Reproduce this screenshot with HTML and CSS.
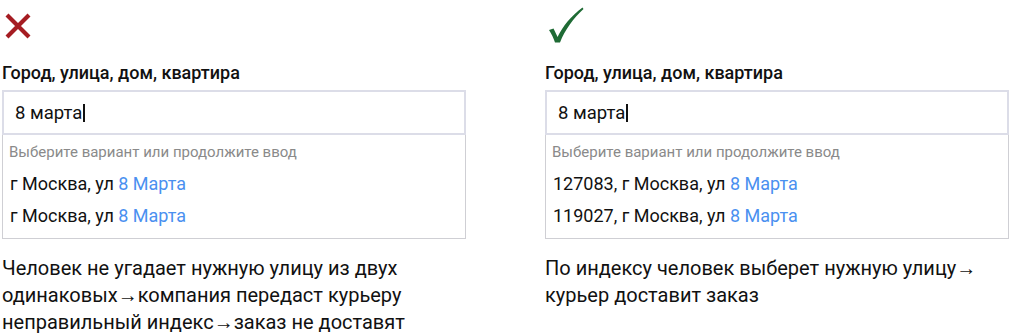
FILE: index.html
```html
<!DOCTYPE html>
<html lang="ru">
<head>
<meta charset="utf-8">
<link rel="stylesheet" href="styles.css">
</head>
<body>
<div class="page">
  <section class="col">
    <div class="mark">
      <svg width="28" height="28" viewBox="0 0 28 28"><path d="M3 3 L25 25 M25 3 L3 25" stroke="#a51c22" stroke-width="4.2" fill="none"/></svg>
    </div>
    <div class="label">Город, улица, дом, квартира</div>
    <div class="input">8 марта<span class="caret"></span></div>
    <div class="drop">
      <div class="hint">Выберите вариант или продолжите ввод</div>
      <div class="opt">г Москва, ул <span class="hl">8 Марта</span></div>
      <div class="opt">г Москва, ул <span class="hl">8 Марта</span></div>
    </div>
    <p class="desc">Человек не угадает нужную улицу из двух одинаковых→компания передаст курьеру неправильный индекс→заказ не доставят</p>
  </section>
  <section class="col">
    <div class="mark">
      <svg width="38" height="38" viewBox="0 0 38 38"><path d="M2 24 L6.5 22.5 C8 25.5 9.5 28.5 10.5 31 C16 20 24 10 35.5 1.5 L36.5 3 C26 12.5 18 24 13 36.5 L8 36.5 C6.5 32 4.5 28 2 24 Z" fill="#1f6b35"/></svg>
    </div>
    <div class="label">Город, улица, дом, квартира</div>
    <div class="input">8 марта<span class="caret"></span></div>
    <div class="drop">
      <div class="hint">Выберите вариант или продолжите ввод</div>
      <div class="opt">127083, г Москва, ул <span class="hl">8 Марта</span></div>
      <div class="opt">119027, г Москва, ул <span class="hl">8 Марта</span></div>
    </div>
    <p class="desc">По индексу человек выберет нужную улицу→ курьер доставит заказ</p>
  </section>
</div>
</body>
</html>
```

FILE: styles.css
```css
html, body {
  margin: 0;
  background: #fff;
}
body {
  font-family: Roboto, "Liberation Sans", sans-serif;
  color: #111;
}
.page {
  display: flex;
  gap: 79px;
  padding-left: 2px;
}
.col {
  width: 464px;
  display: flex;
  flex-direction: column;
}
.mark {
  height: 62px;
  display: flex;
  align-items: flex-start;
  padding-top: 12px;
  padding-left: 2px;
  box-sizing: border-box;
}
.col + .col .mark {
  padding-top: 6px;
  padding-left: 2px;
}
.label {
  font-weight: 500;
  font-size: 18px;
  line-height: 22px;
  height: 28px;
}
.input {
  height: 45px;
  box-sizing: border-box;
  border: 2px solid #dcdde8;
  font-size: 18.5px;
  display: flex;
  align-items: center;
  padding-left: 11px;
}
.caret {
  display: inline-block;
  width: 1.5px;
  height: 18px;
  background: #111;
  margin-left: 1px;
}
.drop {
  border: 1px solid #cfcfd4;
  border-top: none;
  height: 104px;
  box-sizing: border-box;
  padding: 8px 0 0 6px;
}
.hint {
  font-size: 15px;
  color: #8a8a8a;
  line-height: 18px;
  height: 24px;
}
.opt {
  font-size: 18px;
  line-height: 21px;
  height: 32px;
  display: flex;
  align-items: center;
  white-space: pre;
  padding-left: 1px;
}
.hl {
  color: #4a90f0;
}
.desc {
  margin: 16px 0 0 0;
  font-size: 20px;
  line-height: 27px;
  color: #111;
}
```
